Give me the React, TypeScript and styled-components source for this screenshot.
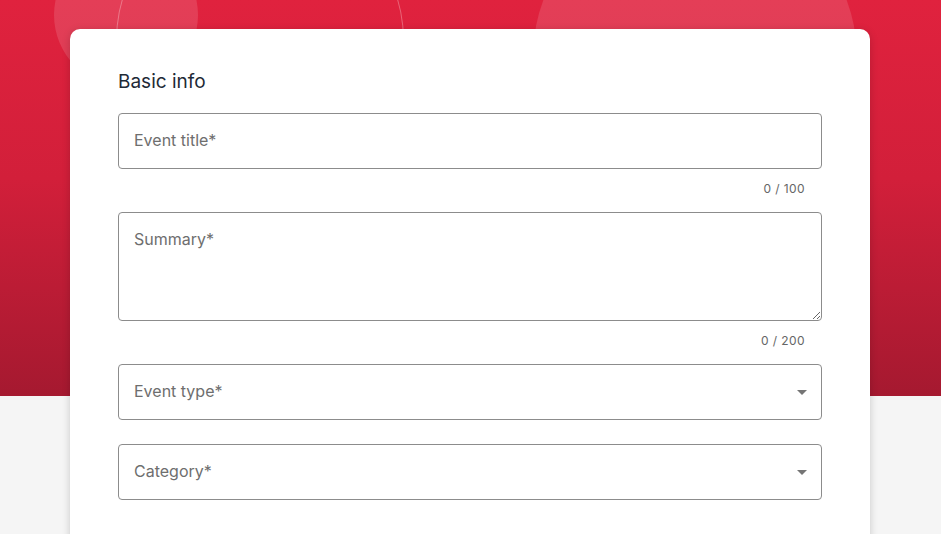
import React from 'react'
import styled, { createGlobalStyle } from 'styled-components'

const GlobalStyle = createGlobalStyle`
  html, body {
    margin: 0;
    padding: 0;
    background: #f5f5f5;
    font-family: Inter, "Liberation Sans", sans-serif;
    overflow: hidden;
  }
`

const Page = styled.div`
  position: relative;
  min-height: 534px;
  padding-top: 29px;
  box-sizing: border-box;
`

const Hero = styled.div`
  position: absolute;
  left: 0;
  top: 0;
  right: 0;
  height: 396px;
  overflow: hidden;
  background: linear-gradient(180deg, #e0223e 0%, #d21f3a 45%, #a51930 100%);
`

const Bubble = styled.div<{ $x: number; $y: number; $r: number; $ring?: boolean }>`
  position: absolute;
  left: ${(p) => p.$x - p.$r}px;
  top: ${(p) => p.$y - p.$r}px;
  width: ${(p) => p.$r * 2}px;
  height: ${(p) => p.$r * 2}px;
  border-radius: 50%;
  box-sizing: border-box;
  background: ${(p) => (p.$ring ? 'transparent' : 'rgba(255, 255, 255, 0.13)')};
  border: ${(p) => (p.$ring ? '1px solid rgba(255, 255, 255, 0.3)' : 'none')};
`

const Card = styled.div`
  position: relative;
  width: 800px;
  margin: 0 auto 0 70px;
  background: #fff;
  border-radius: 10px;
  box-shadow: 0 2px 8px rgba(0, 0, 0, 0.18);
  padding: 41px 48px 40px;
  box-sizing: border-box;
`

const Title = styled.h2`
  margin: 0 0 19px;
  font-size: 19px;
  font-weight: 400;
  line-height: 24px;
  color: #1e2a36;
`

const Field = styled.div<{ $gap?: number }>`
  display: flex;
  flex-direction: column;
  margin-bottom: ${(p) => p.$gap ?? 24}px;
`

const Box = styled.div`
  position: relative;
  display: flex;
`

const fieldCss = `
  width: 100%;
  box-sizing: border-box;
  border: 1px solid #8c8c8c;
  border-radius: 4px;
  background: #fff;
  font-family: Inter, "Liberation Sans", sans-serif;
  font-size: 16px;
  color: #222;
  padding: 0 15px 2px;
  outline: none;
  &::placeholder {
    color: #6e6e6e;
  }
`

const Input = styled.input`
  ${fieldCss}
  height: 56px;
`

const TextArea = styled.textarea`
  ${fieldCss}
  height: 109px;
  padding-top: 15px;
  line-height: 22px;
  resize: vertical;
  display: block;
`

const Select = styled.div`
  ${fieldCss}
  height: 56px;
  display: flex;
  align-items: center;
  color: #6e6e6e;
`

const Arrow = styled.span`
  position: absolute;
  right: 15px;
  top: 26px;
  width: 0;
  height: 0;
  border-left: 5px solid transparent;
  border-right: 5px solid transparent;
  border-top: 5px solid #757575;
`

const Counter = styled.div`
  align-self: flex-end;
  padding: 12px 17px 0 0;
  font-size: 12px;
  line-height: 16px;
  letter-spacing: 0.4px;
  color: #666;
`

const App: React.FC = () => {
  return (
    <>
      <GlobalStyle />
      <Page>
        <Hero>
          <Bubble $x={126} $y={15} $r={72} />
          <Bubble $x={260} $y={40} $r={144} $ring />
          <Bubble $x={695} $y={57} $r={162} />
        </Hero>
        <Card>
          <Title>Basic info</Title>
          <Field $gap={15}>
            <Input placeholder="Event title*" />
            <Counter>0 / 100</Counter>
          </Field>
          <Field $gap={15}>
            <TextArea placeholder="Summary*" />
            <Counter>0 / 200</Counter>
          </Field>
          <Field>
            <Box>
              <Select>Event type*</Select>
              <Arrow />
            </Box>
          </Field>
          <Field>
            <Box>
              <Select>Category*</Select>
              <Arrow />
            </Box>
          </Field>
        </Card>
      </Page>
    </>
  )
}

export default App
